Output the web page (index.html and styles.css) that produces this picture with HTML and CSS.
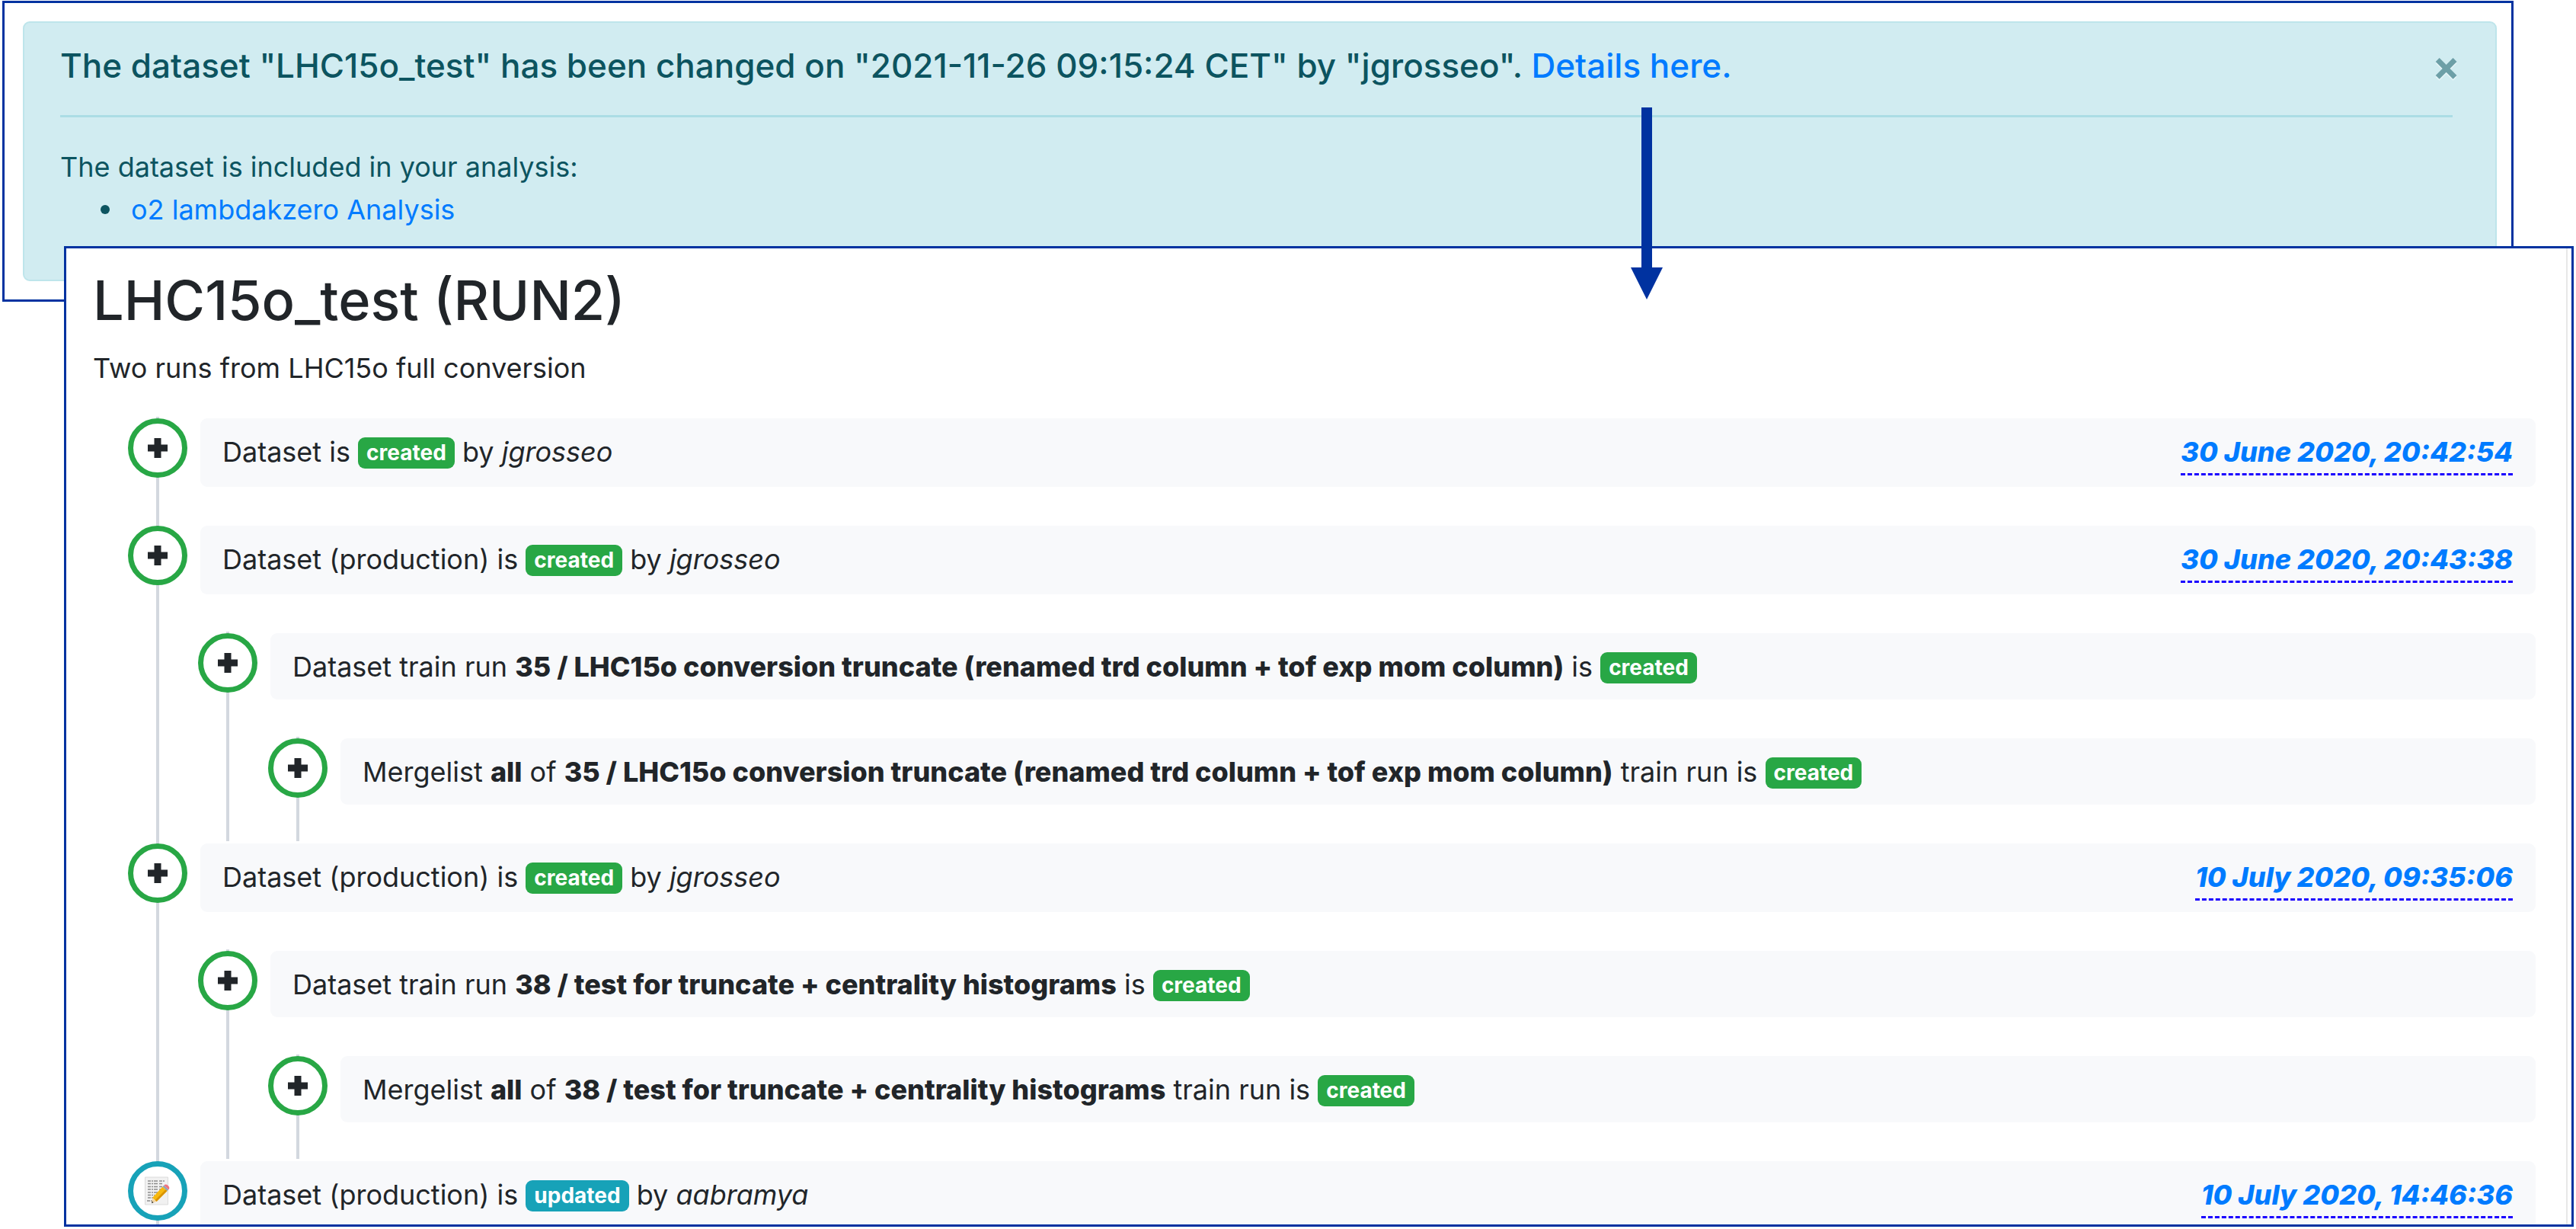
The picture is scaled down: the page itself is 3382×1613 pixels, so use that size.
FILE: index.html
```html
<!DOCTYPE html>
<html lang="en">
<head>
<meta charset="utf-8">
<meta name="viewport" content="width=device-width, initial-scale=1">
<title>LHC15o_test (RUN2)</title>
<link rel="stylesheet" href="styles.css">
</head>
<body>
<svg class="defs" aria-hidden="true">
  <symbol id="plus" viewBox="0 0 26 26">
    <path fill="#212529" d="M8.500 0h9v8.500h8.500v9h-8.500v8.500h-9v-8.500H0v-9h8.500z"/>
  </symbol>
  <symbol id="memo" viewBox="0 0 34 38">
    <path fill="#f1f1f1" stroke="#dcdcdc" d="M.5 1h30v36H.5z"/>
    <path fill="none" stroke="#8c8c8c" stroke-width="1.300" stroke-dasharray="4 1 2 1 5 2" d="M4 6h23M4 9.500h20M4 13.500h22M4 17h18M4 21h13M4 24.500h9M4 28h8M3 32h8"/>
    <path fill="#f7b90f" d="M23.500 13.500l6 5.500-14 14-5.500-5z"/>
    <path fill="#d99300" d="M27.500 17.200l2 1.800-14 14-2-1.700z"/>
    <path fill="#f3d6a4" d="M10 28l5.500 5-6.500 2.200z"/>
    <path fill="#333" d="M9 35.200l.8-2.600 1.700 1.700z"/>
    <path fill="#8fa5b5" d="M23.500 13.500l1.800-1.800 6 5.500-1.800 1.800z"/>
    <path fill="#f0727f" d="M25.300 11.700q2.200-2.200 5 0t1.700 4.700l-.7.800z"/>
  </symbol>
</svg>

<section class="frame notice">
  <div class="alert" role="alert">
    <div class="alert-head">
      <h2>The dataset "LHC15o_test" has been changed on "2021-11-26 09:15:24 CET" by "jgrosseo". <a href="#history">Details here.</a></h2>
      <button class="close" type="button" aria-label="Close">×</button>
    </div>
    <hr>
    <p>The dataset is included in your analysis:</p>
    <ul class="analyses">
      <li><a href="#analysis">o2 lambdakzero Analysis</a></li>
    </ul>
  </div>
</section>

<main class="frame history" id="history">
  <div class="history-body">
    <h1>LHC15o_test (RUN2)</h1>
    <p class="summary">Two runs from LHC15o full conversion</p>
    <ul class="timeline">
      <li>
        <div class="entry">
          <span class="mark"><svg class="plus"><use href="#plus"/></svg></span>
          <div class="card"><p>Dataset is <span class="badge">created</span> by <em>jgrosseo</em></p><a class="date" href="#c1">30 June 2020, 20:42:54</a></div>
        </div>
      </li>
      <li>
        <div class="entry">
          <span class="mark"><svg class="plus"><use href="#plus"/></svg></span>
          <div class="card"><p>Dataset (production) is <span class="badge">created</span> by <em>jgrosseo</em></p><a class="date" href="#c2">30 June 2020, 20:43:38</a></div>
        </div>
        <ul class="timeline">
          <li>
            <div class="entry">
              <span class="mark"><svg class="plus"><use href="#plus"/></svg></span>
              <div class="card"><p>Dataset train run <b>35 / LHC15o conversion truncate (renamed trd column + tof exp mom column)</b> is <span class="badge">created</span></p></div>
            </div>
            <ul class="timeline">
              <li>
                <div class="entry">
                  <span class="mark"><svg class="plus"><use href="#plus"/></svg></span>
                  <div class="card"><p>Mergelist <b>all</b> of <b>35 / LHC15o conversion truncate (renamed trd column + tof exp mom column)</b> train run is <span class="badge">created</span></p></div>
                </div>
              </li>
            </ul>
          </li>
        </ul>
      </li>
      <li>
        <div class="entry">
          <span class="mark"><svg class="plus"><use href="#plus"/></svg></span>
          <div class="card"><p>Dataset (production) is <span class="badge">created</span> by <em>jgrosseo</em></p><a class="date" href="#c3">10 July 2020, 09:35:06</a></div>
        </div>
        <ul class="timeline">
          <li>
            <div class="entry">
              <span class="mark"><svg class="plus"><use href="#plus"/></svg></span>
              <div class="card"><p>Dataset train run <b>38 / test for truncate + centrality histograms</b> is <span class="badge">created</span></p></div>
            </div>
            <ul class="timeline">
              <li>
                <div class="entry">
                  <span class="mark"><svg class="plus"><use href="#plus"/></svg></span>
                  <div class="card"><p>Mergelist <b>all</b> of <b>38 / test for truncate + centrality histograms</b> train run is <span class="badge">created</span></p></div>
                </div>
              </li>
            </ul>
          </li>
        </ul>
      </li>
      <li>
        <div class="entry">
          <span class="mark updated"><svg class="memo"><use href="#memo"/></svg></span>
          <div class="card"><p>Dataset (production) is <span class="badge updated">updated</span> by <em>aabramya</em></p><a class="date" href="#c4">10 July 2020, 14:46:36</a></div>
        </div>
      </li>
    </ul>
  </div>
</main>

<svg class="arrow" viewBox="0 0 42 252" aria-hidden="true">
  <path fill="#0032a0" d="M14 0h14v210h14L21 252 0 210h14z"/>
</svg>
</body>
</html>
```
FILE: styles.css
```css
* { box-sizing: border-box; }

body {
  position: relative;
  display: flex;
  flex-direction: column;
  height: 100vh;
  margin: 0;
  padding: 1px 3px 3px;
  overflow: hidden;
  background: #fff;
  color: #212529;
  font: 36px/56px Inter, "Liberation Sans", sans-serif;
}

h1, h2, p, ul { margin: 0; padding: 0; }
ul { list-style: none; }
h1, h2 { font-weight: 500; }
b { font-weight: 800; }
a { color: #007bff; text-decoration: none; }

.defs { position: absolute; width: 0; height: 0; }

.frame { border: 3px solid #0032a0; background: #fff; }

/* Change notice */
.notice { flex: none; margin-right: 79px; padding: 24px 19px 24px 24px; }

.alert {
  padding: 29px 56px 64px 47px;
  border: 2px solid #bee5eb;
  border-radius: 9px;
  background: #d1ecf1;
  color: #0c5460;
}

.alert-head { display: flex; justify-content: space-between; }
.alert h2 { font-size: 44px; line-height: 54px; }

.close {
  margin: 0 -10px 0 0;
  padding: 0;
  border: 0;
  background: none;
  color: inherit;
  font: 700 54px/54px Inter, sans-serif;
  text-shadow: 0 2px 0 #fff;
  opacity: .5;
}

.alert hr { margin: 38px 0 37px; border: 0; border-top: 3px solid #abdde5; }

.analyses { padding-left: 53px; }
.analyses li { display: flex; align-items: center; gap: 28px; }
.analyses li::before {
  content: "";
  width: 12px;
  height: 12px;
  border-radius: 50%;
  background: #0c5460;
}

/* History panel */
.history {
  position: relative;
  flex: 1;
  min-height: 0;
  margin: -73px 0 0 81px;
  padding-right: 5px;
  overflow: hidden;
}

.history-body {
  min-height: 100%;
  padding: 25px 40px 0 35px;
  border-right: 2px solid #e8e8e8;
}

h1 { font-size: 72px; line-height: 86px; }
.summary { margin: 18px 0 36px; }

/* Timeline: the rail is painted behind each list */
.timeline {
  margin-left: 46px;
  padding-top: 2px;
  background: linear-gradient(#d3d8df, #d3d8df) 37px 0 / 4px 100% no-repeat;
}
.timeline .timeline { margin: 1px 0 0 92px; }
.timeline li + li { margin-top: 3px; }

.entry {
  display: flex;
  align-items: flex-start;
  gap: 17px;
  padding-bottom: 48px;
}

.mark {
  display: flex;
  flex: none;
  align-items: center;
  justify-content: center;
  width: 78px;
  height: 78px;
  border: 7px solid #28a745;
  border-radius: 50%;
  background: #fff;
}
.mark.updated { border-color: #17a2b8; }
.plus { width: 26px; height: 26px; }
.memo { width: 34px; height: 38px; }

.card {
  display: flex;
  flex: 1;
  justify-content: space-between;
  padding: 16px 30px 15px 29px;
  border-radius: 9px;
  background: #f8f9fb;
}

.badge {
  display: inline-block;
  padding: 7px 11px;
  border-radius: 9px;
  background: #28a745;
  color: #fff;
  font-size: 28px;
  font-weight: 700;
  line-height: 27px;
  vertical-align: 2px;
}
.badge.updated { background: #17a2b8; }

.date {
  border-bottom: 3px dashed #1a00ff;
  font-style: italic;
  font-weight: 800;
}

.arrow { position: absolute; top: 141px; left: 2141px; width: 42px; height: 252px; }
```
